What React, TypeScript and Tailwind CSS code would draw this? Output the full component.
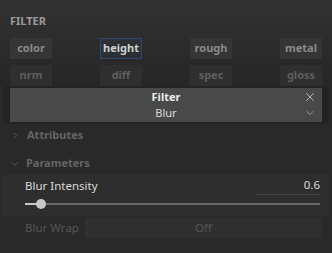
import { X, ChevronDown, ChevronRight } from "lucide-react";

const rows = [
  [
    { label: "color" },
    { label: "height", active: true },
    { label: "rough" },
    { label: "metal" },
  ],
  [{ label: "nrm" }, { label: "diff" }, { label: "spec" }, { label: "gloss" }],
];

function MapButton({ label, active, dim }: { label: string; active?: boolean; dim?: boolean }) {
  return (
    <div
      className={
        "flex h-[21px] w-[42px] items-center justify-center text-[11px] font-bold " +
        (active
          ? "border border-[#2d4b70] bg-[#2c2f33] text-[#cfcfcf]"
          : dim
            ? "bg-[#2f2f2f] text-[#5e5e5e]"
            : "bg-[#353535] text-[#8a8a8a]")
      }
    >
      {label}
    </div>
  );
}

export default function App() {
  return (
    <div
      className="h-[253px] w-[332px] overflow-hidden bg-[#292929] text-[#c8c8c8]"
      style={{ fontFamily: '"Noto Sans", "DejaVu Sans", sans-serif' }}
    >
      <div className="h-[86px] bg-gradient-to-b from-[#323232] to-[#262626] px-[10px] pt-[14px]">
        <div className="text-[11px] font-bold leading-[14px] text-[#9a9a9a]">FILTER</div>
        <div className="mt-[10px] flex flex-col gap-[6px]">
          {rows.map((row, i) => (
            <div key={i} className="flex justify-between">
              {row.map((b) => (
                <MapButton key={b.label} label={b.label} active={b.active} dim={i === 1} />
              ))}
            </div>
          ))}
        </div>
      </div>

      <div className="mx-[3px] bg-[#232323] px-[7px] py-[2px]">
        <div className="relative flex h-[34px] flex-col items-center justify-center bg-[#494949] leading-[16px]">
          <div className="text-[11px] font-bold text-[#ececec]">Filter</div>
          <div className="text-[11px] text-[#dcdcdc]">Blur</div>
          <X className="absolute right-[5px] top-[2px] h-[14px] w-[14px] text-[#d0d0d0]" strokeWidth={1.4} />
          <ChevronDown className="absolute right-[6px] top-[19px] h-[12px] w-[12px] text-[#b0b0b0]" strokeWidth={1.5} />
        </div>
      </div>

      <div className="flex h-[22px] items-center gap-[7px] px-[11px] text-[11px] font-bold text-[#646464]">
        <ChevronRight className="h-[9px] w-[9px]" strokeWidth={2.2} />
        <span>Attributes</span>
      </div>
      <div className="flex h-[29px] items-center gap-[6px] px-[10px] pt-[6px] text-[11px] font-bold text-[#646464]">
        <ChevronDown className="h-[10px] w-[10px]" strokeWidth={2.2} />
        <span>Parameters</span>
      </div>

      <div className="mx-[2px] bg-[#2e2e2e] pb-[3px] pl-[23px] pr-[10px] pt-[1px]">
        <div className="flex items-end justify-between">
          <span className="text-[11.5px] leading-[18px] text-[#dadada]">Blur Intensity</span>
          <span className="w-[64px] border-b border-[#444444] text-right text-[11.5px] leading-[18px] text-[#dadada]">
            0.6
          </span>
        </div>
        <div className="relative flex h-[18px] items-center">
          <div className="h-[2px] w-[15px] bg-[#c8c8c8]" />
          <div className="h-[2px] flex-1 bg-[#6a6a6a]" />
          <div className="absolute left-[11px] top-[4px] h-[10px] w-[10px] rounded-full bg-[#c8c8c8]" />
        </div>
      </div>

      <div className="mt-[2px] flex h-[20px] items-center pl-[25px] pr-[10px]">
        <span className="w-[60px] text-[11.5px] text-[#555555]">Blur Wrap</span>
        <div className="flex h-full flex-1 items-center justify-center bg-[#2f2f2f] text-[11.5px] text-[#555555]">
          Off
        </div>
      </div>
    </div>
  );
}
